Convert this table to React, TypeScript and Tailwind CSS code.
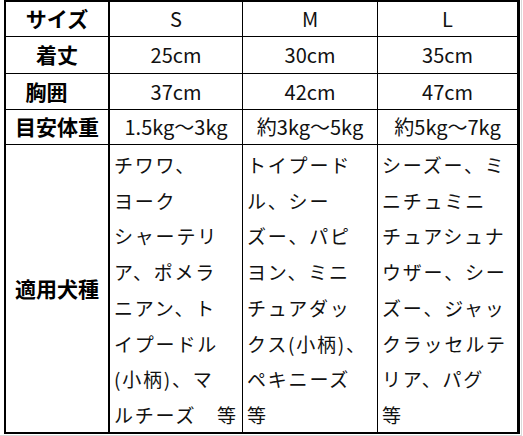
import type { ReactNode } from "react"

const font = { fontFamily: '"Noto Sans CJK JP", "Noto Sans", sans-serif' }

const sizes = ["S", "M", "L"]

const rows: { label: string; values: string[]; pad?: boolean }[] = [
  { label: "着丈", values: ["25cm", "30cm", "35cm"] },
  { label: "胸囲", values: ["37cm", "42cm", "47cm"], pad: true },
  { label: "目安体重", values: ["1.5kg～3kg", "約3kg～5kg", "約5kg～7kg"] },
]

const breeds = [
  ["チワワ、", "ヨーク", "シャーテリ", "ア、ポメラ", "ニアン、ト", "イプードル", "(小柄)、マ", "ルチーズ　等"],
  ["トイプード", "ル、シー", "ズー、パピ", "ヨン、ミニ", "チュアダッ", "クス(小柄)、", "ペキニーズ", "等"],
  ["シーズー、ミ", "ニチュミニ", "チュアシュナ", "ウザー、シー", "ズー、ジャッ", "クラッセルテ", "リア、パグ", "等"],
]

const Label = ({ children }: { children: ReactNode }) => (
  <div className="bg-white border-r border-black flex items-center justify-center text-[21px] font-bold text-black">
    {children}
  </div>
)

const Value = ({ children }: { children: ReactNode }) => (
  <div className="bg-white flex items-center justify-center text-[20px] text-[#111]">{children}</div>
)

export default function App() {
  return (
    <div style={font} className="w-[523px] h-[436px] bg-white">
      <div className="w-[522px] h-[436px] border-r border-b border-[#dadada] pl-[4px]">
        <div className="w-[516px] bg-black pl-[2px] pt-[2px] pr-[3px] pb-[2px]">
          <div className="grid grid-cols-[103px_132px_134px_139px] grid-rows-[34px_36px_35px_34px_287px] gap-px">
            <Label>サイズ</Label>
            {sizes.map((s) => (
              <Value key={s}>{s}</Value>
            ))}
            {rows.map((r) => (
              <>
                <Label key={r.label}>
                  <span className={r.pad ? "pr-[21px]" : ""}>{r.label}</span>
                </Label>
                {r.values.map((v, i) => (
                  <Value key={r.label + i}>{v}</Value>
                ))}
              </>
            ))}
            <Label>適用犬種</Label>
            {breeds.map((lines, i) => (
              <div key={i} className="bg-white pl-[4px] pt-[2px] text-[19px] leading-[35.7px] tracking-[1.8px] text-[#111] whitespace-nowrap">
                {lines.map((l, j) => (
                  <div key={j}>{l}</div>
                ))}
              </div>
            ))}
          </div>
        </div>
      </div>
    </div>
  )
}
